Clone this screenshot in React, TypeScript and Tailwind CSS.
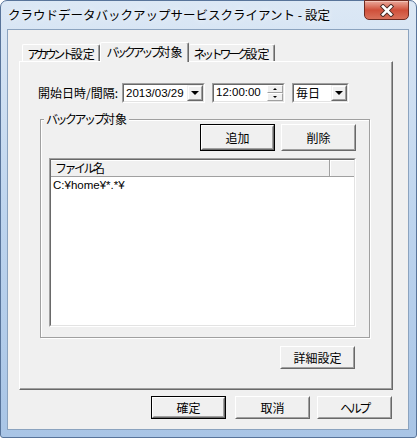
import React from "react";

function J({ t, tight }: { t: string; tight?: boolean }) {
  const parts = t.split(/([\u30A0-\u30FF]+)/);
  return (
    <>
      {parts.map((p, i) =>
        /[\u30A0-\u30FF]/.test(p) ? (
          <span key={i} className={tight ? "tracking-[-3.3px]" : "tracking-[-2.5px]"}>{p}</span>
        ) : (
          <span key={i}>{p}</span>
        )
      )}
    </>
  );
}

function Raised({ className, children, def }: { className: string; children?: React.ReactNode; def?: boolean }) {
  const inner = (
    <div className="h-full w-full border border-t-white border-l-white border-r-[#696969] border-b-[#696969] bg-[#f0f0f0]">
      <div className="h-full w-full border border-t-[#f0f0f0] border-l-[#f0f0f0] border-r-[#a0a0a0] border-b-[#a0a0a0] flex items-center justify-center whitespace-nowrap">
        {children}
      </div>
    </div>
  );
  if (def) {
    return <div className={"border border-[#000] " + className}>{inner}</div>;
  }
  return <div className={className}>{inner}</div>;
}

function Sunken({ className, children }: { className: string; children?: React.ReactNode }) {
  return (
    <div className={"border border-t-[#a0a0a0] border-l-[#a0a0a0] border-r-white border-b-white " + className}>
      <div className="h-full w-full border border-t-[#696969] border-l-[#696969] border-r-[#e3e3e3] border-b-[#e3e3e3] bg-white flex flex-col">
        {children}
      </div>
    </div>
  );
}

function Arrow() {
  return (
    <div className="w-0 h-0 border-l-[4px] border-r-[4px] border-t-[4px] border-l-transparent border-r-transparent border-t-black" />
  );
}

function Combo({ className, children }: { className: string; children: React.ReactNode }) {
  return (
    <Sunken className={className}>
      <div className="flex h-full items-center">
        <div className="pl-[2px] whitespace-nowrap">{children}</div>
        <div className="ml-auto w-[16px] h-full">
          <div className="h-full w-full border border-t-[#f0f0f0] border-l-[#f0f0f0] border-r-[#696969] border-b-[#696969] bg-[#f0f0f0]">
            <div className="h-full w-full border border-t-white border-l-white border-r-[#a0a0a0] border-b-[#a0a0a0] flex items-center justify-center">
              <Arrow />
            </div>
          </div>
        </div>
      </div>
    </Sunken>
  );
}

export default function App() {
  return (
    <div className="w-[417px] h-[438px] bg-white font-['Noto_Sans_CJK_JP',sans-serif] text-[12px] leading-none text-black">
      <div className="w-[417px] h-[438px] rounded-t-[7px] rounded-b-[3px] border border-[#58749a] bg-gradient-to-b from-[#dce8f5] via-[#bdd4ee] to-[#a9c5e6] flex flex-col">
        {/* title bar */}
        <div className="h-[28px] flex items-start">
          <div className="pl-[7px] pt-[8px] text-[12.5px] whitespace-nowrap [text-shadow:0_0_6px_#ffffff] text-black">
            クラウドデータバックアップサービスクライアント - 設定
          </div>
          <div className="ml-auto mr-[7px] -mt-px w-[45px] h-[20px] rounded-b-[5px] border border-[#6e2a20] bg-gradient-to-b from-[#e9a99c] via-[#cf4f3a] to-[#d9715b] shadow-[inset_0_1px_0_#f3c4b8] flex items-center justify-center">
            <svg width="16" height="13" viewBox="0 0 16 13">
              <path d="M4 2.5 L12 10.5 M12 2.5 L4 10.5" stroke="#4a2a24" strokeWidth="4.5" strokeLinecap="square" />
              <path d="M4 2.5 L12 10.5 M12 2.5 L4 10.5" stroke="#ffffff" strokeWidth="2.6" strokeLinecap="square" />
            </svg>
          </div>
        </div>

        {/* client area */}
        <div className="ml-[6px] w-[402px] h-[401px] border border-[#8ba3bf] bg-[#f0f0f0] flex flex-col">
          {/* tabs */}
          <div className="mt-[12px] ml-[14px] h-[19px] flex items-end">
            <div className="w-[78px] h-[17px] rounded-t-[2px] border-t border-l border-white border-r border-r-[#696969] shadow-[inset_-1px_0_0_#a0a0a0] flex items-center justify-center pt-[1px] whitespace-nowrap">
              <J t="アカウント設定" tight />
            </div>
            <div className="relative z-10 -mb-px w-[89px] h-[20px] rounded-t-[2px] border-t border-l border-white border-r border-r-[#696969] shadow-[inset_-1px_0_0_#a0a0a0] bg-[#f0f0f0] flex items-center justify-center pb-[2px] whitespace-nowrap">
              <J t="バックアップ対象" tight />
            </div>
            <div className="w-[86px] h-[17px] rounded-t-[2px] border-t border-white border-r border-r-[#696969] shadow-[inset_-1px_0_0_#a0a0a0] flex items-center justify-center pt-[1px] whitespace-nowrap">
              <J t="ネットワーク設定" tight />
            </div>
          </div>

          {/* tab panel */}
          <div className="ml-[11px] w-[374px] h-[329px] border-t border-l border-white border-r border-b border-r-[#696969] border-b-[#696969] shadow-[inset_-1px_-1px_0_#a0a0a0] flex flex-col">
            {/* start row */}
            <div className="mt-[21px] pl-[18px] h-[20px] flex items-center">
              <div className="w-[84px] whitespace-nowrap">開始日時/間隔:</div>
              <Combo className="w-[83px] h-[20px]">
                <span className="font-['Liberation_Sans','Noto_Sans_CJK_JP',sans-serif] text-[11.5px]">2013/03/29</span>
              </Combo>
              <Sunken className="ml-[7px] w-[73px] h-[20px]">
                <div className="flex h-full items-center">
                  <div className="pl-[2px] font-['Liberation_Sans','Noto_Sans_CJK_JP',sans-serif] text-[11.5px]">12:00:00</div>
                  <div className="ml-auto w-[16px] h-full flex flex-col">
                    <div className="h-1/2 border border-t-white border-l-white border-r-[#a0a0a0] border-b-[#a0a0a0] bg-[#f0f0f0] flex items-center justify-center">
                      <div className="w-0 h-0 border-l-[2px] border-r-[2px] border-b-[2px] border-l-transparent border-r-transparent border-b-black" />
                    </div>
                    <div className="h-1/2 border border-t-white border-l-white border-r-[#a0a0a0] border-b-[#a0a0a0] bg-[#f0f0f0] flex items-center justify-center">
                      <div className="w-0 h-0 border-l-[2px] border-r-[2px] border-t-[2px] border-l-transparent border-r-transparent border-t-black" />
                    </div>
                  </div>
                </div>
              </Sunken>
              <Combo className="ml-[7px] w-[57px] h-[20px]">毎日</Combo>
            </div>

            {/* group box */}
            <div className="relative mt-[16px] ml-[20px] w-[330px] h-[219px] border border-[#a0a0a0] shadow-[inset_1px_1px_0_#ffffff,1px_1px_0_#ffffff] flex flex-col">
              <div className="absolute left-[3px] -top-[7px] px-[2px] bg-[#f0f0f0] whitespace-nowrap">
                <J t="バックアップ対象" />
              </div>
              <div className="mt-[4px] pr-[13px] flex justify-end gap-[6px]">
                <Raised def className="w-[75px] h-[27px]">追加</Raised>
                <Raised className="w-[75px] h-[27px]">削除</Raised>
              </div>
              <Sunken className="mt-[7px] ml-[8px] w-[307px] h-[169px]">
                <div className="h-[17px] flex bg-[#f0f0f0] border-b border-[#a0a0a0] shadow-[inset_0_1px_0_#ffffff]">
                  <div className="w-[279px] h-full border-r border-[#a0a0a0] flex items-center pl-[4px] whitespace-nowrap">
                    <J t="ファイル名" />
                  </div>
                  <div className="flex-1 shadow-[inset_1px_0_0_#ffffff]" />
                </div>
                <div className="h-[15px] flex items-center pl-[2px] mt-px whitespace-nowrap font-['Liberation_Sans','Noto_Sans_CJK_JP',sans-serif] text-[11.5px]">C:¥home¥*.*¥</div>
              </Sunken>
            </div>

            <div className="mt-[8px] ml-[260px]">
              <Raised className="w-[75px] h-[23px]">詳細設定</Raised>
            </div>
          </div>

          {/* bottom buttons */}
          <div className="mt-[6px] ml-[11px] w-[374px] pr-[1px] flex justify-end">
            <Raised def className="w-[75px] h-[23px]">確定</Raised>
            <Raised className="ml-[9px] w-[75px] h-[23px]">取消</Raised>
            <Raised className="ml-[7px] w-[75px] h-[23px]">
              <J t="ヘルプ" />
            </Raised>
          </div>
        </div>
      </div>
    </div>
  );
}
